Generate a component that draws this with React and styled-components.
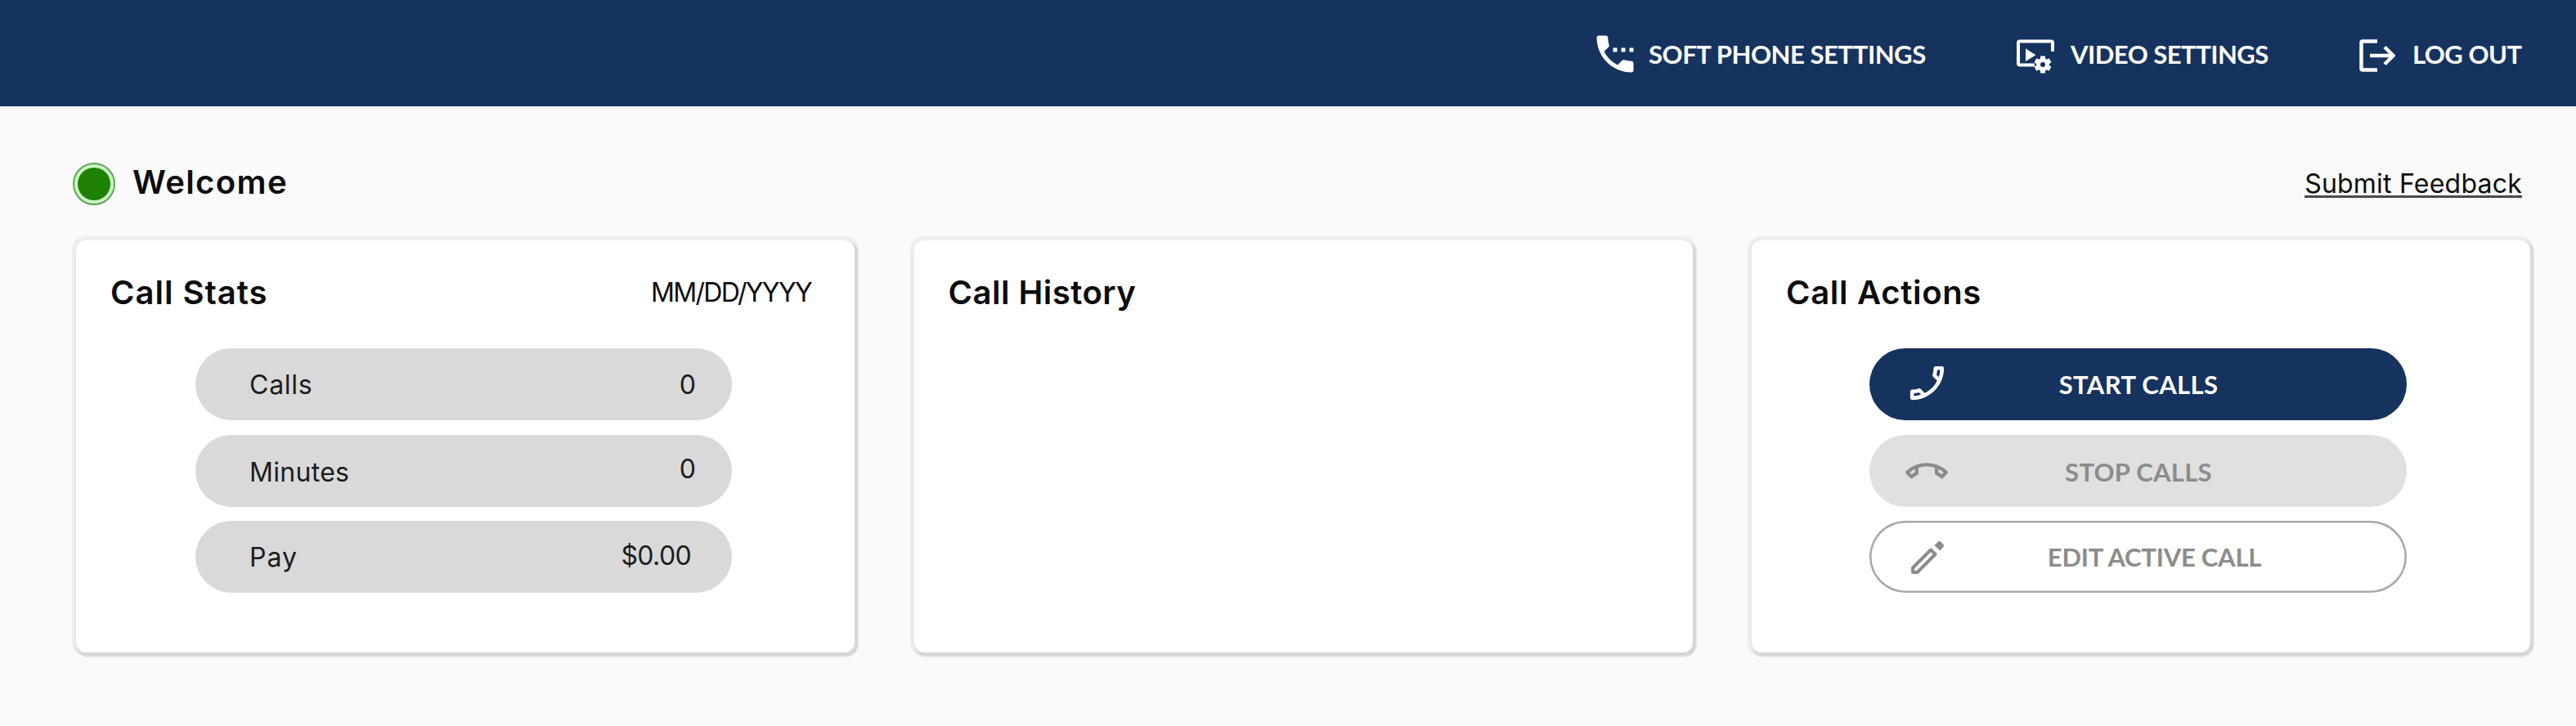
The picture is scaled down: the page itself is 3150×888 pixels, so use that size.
import React from 'react';
import styled, { createGlobalStyle } from 'styled-components';
import {
  MdSettingsPhone,
  MdOutlinePhoneEnabled,
  MdOutlineCallEnd,
} from 'react-icons/md';

const navy = '#16325f';

const GlobalStyle = createGlobalStyle`
  *, *::before, *::after { box-sizing: border-box; }
  body {
    margin: 0;
    background: #fafafa;
    color: #0c0c0c;
    font-family: Inter, "Liberation Sans", sans-serif;
    overflow: hidden;
  }
`;

const Page = styled.div`
  width: 3150px;
  height: 888px;
  background: #fafafa;
`;

const Header = styled.header`
  display: flex;
  align-items: center;
  justify-content: flex-end;
  gap: 109px;
  height: 130px;
  padding: 1px 66px 0 0;
  background: ${navy};
`;

const NavLink = styled.a`
  display: flex;
  align-items: center;
  color: #fff;
  white-space: nowrap;

  svg {
    flex: none;
    margin-right: ${(p) => p.$gap}px;
    margin-top: ${(p) => p.$iconDrop || 0}px;
  }
`;

const NavLabel = styled.span`
  width: ${(p) => p.$width}px;
  font: 700 31px/40px Lato, sans-serif;
  letter-spacing: ${(p) => p.$spacing}px;
`;

const Main = styled.main`
  padding-top: 65px;
`;

const WelcomeBar = styled.section`
  display: flex;
  align-items: center;
  height: 60px;
  padding: 0 66px 0 89px;
`;

const StatusDot = styled.span`
  display: grid;
  place-items: center;
  width: 52px;
  height: 52px;
  border: 2px solid #62a35a;
  border-radius: 50%;
  background: #c9f7c2;

  &::after {
    content: '';
    width: 40px;
    height: 40px;
    border-radius: 50%;
    background: #1d8203;
  }
`;

const Greeting = styled.h1`
  margin: -5px 0 0 21px;
  font-size: 40px;
  font-weight: 600;
  line-height: 48px;
  letter-spacing: 1.4px;
`;

const FeedbackLink = styled.a`
  margin: 2px 0 0 auto;
  border-bottom: 3px solid #4a4a4a;
  font-size: 32px;
  line-height: 29px;
  letter-spacing: 0.22px;
`;

const Cards = styled.div`
  display: flex;
  gap: 72.5px;
  margin: 39px 0 0 93px;
`;

const Card = styled.section`
  width: 952px;
  height: 504px;
  padding-top: 33px;
  border-radius: 12px;
  background: #fff;
  box-shadow: 2px 3px 2px 2px #d6d6d6, 0 0 1px 4.5px #ededed;
`;

const CardHeader = styled.div`
  display: flex;
  align-items: center;
  justify-content: space-between;
  height: 60px;
  padding: 0 53px 0 42px;
`;

const CardTitle = styled.h2`
  margin: 0;
  font-size: 40px;
  font-weight: 600;
  letter-spacing: ${(p) => p.$spacing}px;
`;

const DateText = styled.span`
  font-size: 32px;
  letter-spacing: -1.66px;
`;

const Stack = styled.div`
  display: flex;
  flex-direction: column;
  gap: 17.5px;
  margin: 39px 0 0 ${(p) => p.$left}px;
`;

const StatRow = styled.div`
  display: flex;
  align-items: center;
  justify-content: space-between;
  width: 656px;
  height: 88px;
  padding: 0 ${(p) => p.$right}px 0 66px;
  border-radius: 44px;
  background: #d9d9d9;
`;

const StatText = styled.span`
  margin-top: ${(p) => p.$drop}px;
  color: #1c1c1c;
  font-size: 32px;
  line-height: 40px;
  letter-spacing: ${(p) => p.$spacing}px;
`;

const variants = {
  primary: `background: ${navy}; color: #fff;`,
  disabled: 'background: #e0e0e0; color: #8c8c8c;',
  outline: 'background: #fff; color: #8c8c8c; box-shadow: inset 0 0 0 2.5px #a8a8a8;',
};

const ActionButton = styled.button`
  display: flex;
  align-items: center;
  width: 657px;
  height: 88px;
  padding: 0 ${(p) => p.$right}px 0 41px;
  border: 0;
  border-radius: 44px;
  ${(p) => variants[p.$variant]}
`;

const IconSlot = styled.span`
  display: grid;
  place-items: center;
  flex: none;
  width: 58px;
  height: 58px;
  margin-top: ${(p) => p.$drop}px;
`;

const ActionLabel = styled.span`
  flex: 1;
  margin-top: ${(p) => p.$drop}px;
  font: 700 31px/40px Lato, sans-serif;
  letter-spacing: ${(p) => p.$spacing}px;
  text-align: center;
  white-space: nowrap;
`;

const VideoSettingsIcon = () => (
  <svg width="46" height="42" viewBox="0 0 46 42">
    <path d="M22 31.5H4q-2 0-2-2V4.500q0-2 2-2h38q2 0 2 2V15" fill="none" stroke="currentColor" strokeWidth="4" />
    <path d="M11 11.500v15.500l12.500-7.800z" fill="currentColor" />
    <g transform="translate(32 31)">
      <g fill="currentColor">
        {[0, 60, 120].map((a) => (
          <rect key={a} x="-3" y="-10.500" width="6" height="21" rx="0.800" transform={`rotate(${a})`} />
        ))}
        <circle r="8" />
      </g>
      <circle r="3" fill={navy} />
    </g>
  </svg>
);

const LogoutIcon = () => (
  <svg width="44" height="40" viewBox="0 0 44 40" fill="none" stroke="currentColor" strokeWidth="4.500">
    <path d="M22 2.500H4q-1.500 0-1.500 1.500V36q0 1.500 1.500 1.500H22" />
    <path d="M13 20H40M31 9.500L41.500 20L31 30.500" />
  </svg>
);

const PencilIcon = ({ size }) => (
  <svg width={size} height={size} viewBox="0 0 46 46">
    <path d="M6 35.500L28 13.500L33.500 19L11.500 41H6Z" fill="none" stroke="currentColor" strokeWidth="4" strokeLinejoin="round" />
    <path d="M32.500 8L37 3.500Q38.500 2 40 3.500L43.500 7Q45 8.500 43.500 10L39 14.500Z" fill="currentColor" />
  </svg>
);

const stats = [
  { label: 'Calls', value: '0', drop: 2, valueDrop: 2, spacing: 0.75, valueSpacing: 0, right: 44 },
  { label: 'Minutes', value: '0', drop: 4, valueDrop: -4, spacing: 0.3, valueSpacing: 0, right: 44 },
  { label: 'Pay', value: '$0.00', drop: 1, valueDrop: -3, spacing: 1, valueSpacing: -0.63, right: 50 },
];

const actions = [
  { label: 'START CALLS', Icon: MdOutlinePhoneEnabled, size: 55, iconDrop: -3, drop: 0, spacing: 0.34, right: 98, variant: 'primary' },
  { label: 'STOP CALLS', Icon: MdOutlineCallEnd, size: 52, iconDrop: 3, drop: 2, spacing: 0.28, right: 98, variant: 'disabled' },
  { label: 'EDIT ACTIVE CALL', Icon: PencilIcon, size: 46, iconDrop: 1, drop: 0, spacing: -0.23, right: 59, variant: 'outline' },
];

export default function App() {
  return (
    <Page>
      <GlobalStyle />
      <Header>
        <NavLink $gap={11}>
          <MdSettingsPhone size={60} />
          <NavLabel $width={341} $spacing={-0.42}>SOFT PHONE SETTINGS</NavLabel>
        </NavLink>
        <NavLink $gap={20} $iconDrop={7}>
          <VideoSettingsIcon />
          <NavLabel $width={244} $spacing={-0.5}>VIDEO SETTINGS</NavLabel>
        </NavLink>
        <NavLink $gap={21} $iconDrop={5}>
          <LogoutIcon />
          <NavLabel $width={134} $spacing={-0.5}>LOG OUT</NavLabel>
        </NavLink>
      </Header>
      <Main>
        <WelcomeBar>
          <StatusDot />
          <Greeting>Welcome</Greeting>
          <FeedbackLink>Submit Feedback</FeedbackLink>
        </WelcomeBar>
        <Cards>
          <Card>
            <CardHeader>
              <CardTitle $spacing={1}>Call Stats</CardTitle>
              <DateText>MM/DD/YYYY</DateText>
            </CardHeader>
            <Stack $left={146}>
              {stats.map((s) => (
                <StatRow key={s.label} $right={s.right}>
                  <StatText $drop={s.drop} $spacing={s.spacing}>{s.label}</StatText>
                  <StatText $drop={s.valueDrop} $spacing={s.valueSpacing}>{s.value}</StatText>
                </StatRow>
              ))}
            </Stack>
          </Card>
          <Card>
            <CardHeader>
              <CardTitle $spacing={0.5}>Call History</CardTitle>
            </CardHeader>
          </Card>
          <Card>
            <CardHeader>
              <CardTitle $spacing={0.7}>Call Actions</CardTitle>
            </CardHeader>
            <Stack $left={144}>
              {actions.map(({ label, Icon, size, iconDrop, drop, spacing, right, variant }) => (
                <ActionButton key={label} $variant={variant} $right={right}>
                  <IconSlot $drop={iconDrop}>
                    <Icon size={size} />
                  </IconSlot>
                  <ActionLabel $drop={drop} $spacing={spacing}>{label}</ActionLabel>
                </ActionButton>
              ))}
            </Stack>
          </Card>
        </Cards>
      </Main>
    </Page>
  );
}
